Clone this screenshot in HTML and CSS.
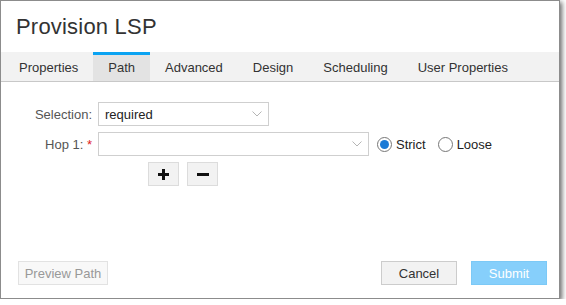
FILE: index.html
```html
<!DOCTYPE html>
<html lang="en">
<head>
    <meta charset="UTF-8">
    <title>Provision LSP</title>
    <link rel="stylesheet" href="styles.css">
</head>
<body>
    <div class="dialog">
        <div class="dialog-header">
            <h1>Provision LSP</h1>
        </div>

        <div class="tabs">
            <div class="tab">Properties</div>
            <div class="tab active">Path</div>
            <div class="tab">Advanced</div>
            <div class="tab">Design</div>
            <div class="tab">Scheduling</div>
            <div class="tab">User Properties</div>
        </div>

        <div class="dialog-body">
            <div class="form-row">
                <label class="field-label">Selection:</label>
                <div class="select select-short">
                    <span>required</span>
                    <svg class="chevron" width="10" height="6" viewBox="0 0 10 6"><path d="M0.5 0.5 L5 5 L9.5 0.5" fill="none" stroke="#b5b5b5" stroke-width="1"/></svg>
                </div>
            </div>

            <div class="form-row">
                <label class="field-label">Hop 1: <span class="req">*</span></label>
                <div class="select select-long">
                    <span></span>
                    <svg class="chevron" width="10" height="6" viewBox="0 0 10 6"><path d="M0.5 0.5 L5 5 L9.5 0.5" fill="none" stroke="#b5b5b5" stroke-width="1"/></svg>
                </div>
                <div class="radio-group">
                    <span class="radio checked"></span>
                    <span class="radio-text">Strict</span>
                    <span class="radio"></span>
                    <span class="radio-text">Loose</span>
                </div>
            </div>

            <div class="hop-buttons">
                <button class="icon-btn">
                    <svg width="11" height="11" viewBox="0 0 11 11"><rect x="4" y="0" width="3" height="11" fill="#111"/><rect x="0" y="4" width="11" height="3" fill="#111"/></svg>
                </button>
                <button class="icon-btn">
                    <svg width="12" height="3" viewBox="0 0 12 3"><rect x="0" y="0" width="12" height="3" fill="#111"/></svg>
                </button>
            </div>
        </div>

        <div class="dialog-footer">
            <button class="btn btn-disabled">Preview Path</button>
            <div class="footer-right">
                <button class="btn btn-cancel">Cancel</button>
                <button class="btn btn-submit">Submit</button>
            </div>
        </div>
    </div>
</body>
</html>
```

FILE: styles.css
```css
* {
    box-sizing: border-box;
    margin: 0;
    padding: 0;
}

body {
    font-family: 'Liberation Sans', Arial, sans-serif;
    font-size: 13px;
    color: #333;
    background-color: #fff;
}

.dialog {
    width: 560px;
    height: 299px;
    border: 1px solid #8c8c8c;
    background-color: #fff;
    box-shadow: 2px 2px 5px rgba(0, 0, 0, 0.6);
    display: flex;
    flex-direction: column;
}

.dialog-header {
    height: 51px;
    padding: 13px 15px 0;
}

h1 {
    font-size: 22px;
    font-weight: normal;
    line-height: 26px;
    color: #333;
    letter-spacing: 0.2px;
}

.tabs {
    display: flex;
    height: 30px;
    padding-left: 3px;
    background-color: #f2f2f2;
    border-bottom: 1px solid #c8c8c8;
}

.tab {
    padding: 0 15px;
    border-top: 3px solid transparent;
    line-height: 26px;
    color: #333;
}

.tab.active {
    border-top-color: #0aa3f2;
    background-color: #e3e3e3;
}

.dialog-body {
    flex: 1;
    padding-top: 20px;
}

.form-row {
    display: flex;
    align-items: center;
    margin-bottom: 6px;
}

.field-label {
    width: 91px;
    margin-right: 6px;
    text-align: right;
    color: #555;
}

.req {
    color: #e02020;
}

.select {
    height: 24px;
    border: 1px solid #cfcfcf;
    display: flex;
    align-items: center;
    justify-content: space-between;
    padding: 0 6px;
    color: #222;
}

.select-short {
    width: 171px;
}

.select-long {
    width: 271px;
}

.chevron {
    display: block;
}

.radio-group {
    display: flex;
    align-items: center;
    margin-left: 8px;
}

.radio {
    width: 15px;
    height: 15px;
    border: 1px solid #777;
    border-radius: 50%;
    position: relative;
    margin-right: 4px;
}

.radio.checked::after {
    content: '';
    position: absolute;
    left: 2px;
    top: 2px;
    width: 9px;
    height: 9px;
    border-radius: 50%;
    background-color: #1a7ad6;
}

.radio-text {
    margin-right: 12px;
    color: #222;
}

.hop-buttons {
    display: flex;
    gap: 8px;
    margin-left: 147px;
    margin-top: 6px;
}

.icon-btn {
    width: 31px;
    height: 24px;
    border: 1px solid #dcdcdc;
    background-color: #f2f2f2;
    display: flex;
    align-items: center;
    justify-content: center;
}

.dialog-footer {
    display: flex;
    justify-content: space-between;
    align-items: flex-end;
    padding: 0 12px 13px 17px;
}

.footer-right {
    display: flex;
    gap: 14px;
}

.btn {
    height: 24px;
    font-family: 'Liberation Sans', Arial, sans-serif;
    font-size: 13px;
}

.btn-disabled {
    width: 90px;
    background-color: #f8f8f8;
    border: 1px solid #e2e2e2;
    color: #999;
}

.btn-cancel {
    width: 76px;
    background-color: #f2f2f2;
    border: 1px solid #cccccc;
    color: #333;
}

.btn-submit {
    width: 76px;
    background-color: #86cffb;
    border: 1px solid #7cc9f6;
    color: #fff;
}
```
